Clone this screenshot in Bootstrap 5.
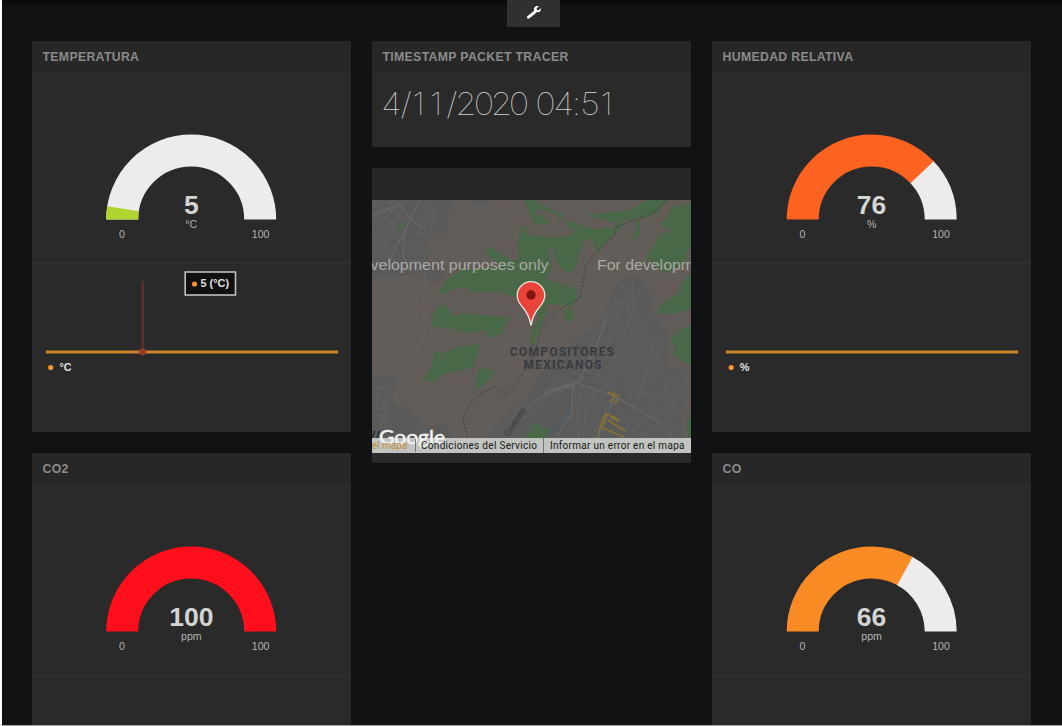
<!DOCTYPE html>
<html lang="es">
<head>
<meta charset="utf-8">
<meta name="viewport" content="width=device-width, initial-scale=1">
<title>Panel de sensores</title>
<link href="https://cdn.jsdelivr.net/npm/bootstrap@5.3.0/dist/css/bootstrap.min.css" rel="stylesheet">
<style>
  body { background: #111214; font-family: "Liberation Sans", Arial, sans-serif; height: 726px; overflow: hidden; border-left: 2px solid #fff; border-bottom: 1px solid #a5a5a5; }
  .board-top { height: 41px; padding-left: 3px; background: linear-gradient(#08090a, #111214 7px); }
  .tool-tab { width: 53px; height: 27px; background: #303030; }
  .board-cols { gap: 21px; padding-left: 30px; height: 684px; overflow: hidden; }
  .board-col { width: 319px; gap: 21px; }
  .pane { background: #2a2a2a; }
  .pane-cut { height: 272px; }
  .pane-title { height: 31px; line-height: 32px; padding-left: 10.5px; margin: 0; background: #272727; color: #8b8b8b; font-size: 12.3px; letter-spacing: .31px; font-weight: 700; white-space: nowrap; }
  .gauge-box { height: 192px; border-bottom: 1px solid #323232; }
  .spark-box { height: 168px; }
  .stamp-pane { height: 106px; }
  .stamp { font-family: Inter, sans-serif; font-weight: 100; font-size: 31.5px; fill: #d3d4d4; text-anchor: middle; }
  .map-head { height: 32px; background: #272727; }
  .map-foot { height: 10px; }
  svg { display: block; }
  .gv { font: 700 26.5px "Liberation Sans", sans-serif; fill: #d3d4d4; text-anchor: middle; }
  .gu { font: 10.6px "Liberation Sans", sans-serif; fill: #b3b3b3; text-anchor: middle; }
  .lg { font: 700 11px "Liberation Sans", sans-serif; fill: #e0e0e0; }
  .arc { fill: none; stroke-width: 32; }
  .green { fill: #486848; }
  .earth { fill: #625d58; }
  .urban { fill: #5a5a5a; }
  .street { fill: none; stroke: #636566; stroke-width: .8; }
  .avenue { fill: none; stroke: #676a6b; stroke-width: 1.2; }
  .trail { fill: none; stroke: #403f3e; stroke-width: 1; stroke-dasharray: 2 1.8; }
</style>
</head>
<body>
<header class="board-top d-flex align-items-start justify-content-center">
  <div class="tool-tab d-flex justify-content-center">
    <svg width="53" height="27" viewBox="0 0 53 27"><path d="M21.500 17.200l6.500-5.400" stroke="#fff" stroke-width="3" stroke-linecap="round"/><path d="M31.800 6.300l-2.300 2.200.5 1.400 1.500.3 2.300-2c.5 2.300-1 4.200-3.500 4.100-2.800-.1-4.200-2.400-3-4.500.9-1.600 2.700-2.200 4.500-1.500z" fill="#fff"/></svg>
  </div>
</header>
<main class="board-cols d-flex align-items-start">
  <div class="board-col d-flex flex-column">
    <section class="pane">
      <h2 class="pane-title">TEMPERATURA</h2>
      <div class="gauge-box">
        <svg width="319" height="191" viewBox="0 0 319 191">
          <path class="arc" stroke="#edebec" d="M90.2 147.5a69 69 0 0 1 138 0"/>
          <path class="arc" stroke="#b0d430" pathLength="100" stroke-dasharray="5 200" d="M90.2 147.5a69 69 0 0 1 138 0"/>
          <text class="gv" x="159.3" y="141.8">5</text><text class="gu" x="159.3" y="156.2">°C</text>
          <text class="gu" x="90" y="166">0</text><text class="gu" x="228.6" y="166">100</text>
        </svg>
      </div>
      <div class="spark-box">
        <svg width="319" height="168" viewBox="0 0 319 168">
          <path d="M14 88h292" stroke="#c9842a" stroke-width="3"/>
          <path d="M110.7 17v70" stroke="#6c302b" stroke-width="2"/>
          <circle cx="110.5" cy="87.7" r="3.5" fill="#9b3a2b"/>
          <rect x="153.2" y="8" width="50.3" height="23" fill="#111" stroke="#c0c0c0" stroke-width="1.6"/>
          <circle cx="162.5" cy="20" r="2.6" fill="#f7952c"/>
          <text class="lg" x="168.5" y="23.3" textLength="28.5" lengthAdjust="spacingAndGlyphs">5 (°C)</text>
          <circle cx="18.7" cy="103.6" r="2.6" fill="#f7952c"/><text class="lg" x="27.6" y="106.600" textLength="12" lengthAdjust="spacingAndGlyphs">°C</text>
        </svg>
      </div>
    </section>
    <section class="pane pane-cut">
      <h2 class="pane-title">CO2</h2>
      <div class="gauge-box">
        <svg width="319" height="191" viewBox="0 0 319 191">
          <path class="arc" stroke="#ff0f1b" d="M90.2 147.5a69 69 0 0 1 138 0"/>
          <text class="gv" x="159.3" y="141.8">100</text><text class="gu" x="159.3" y="156.2">ppm</text>
          <text class="gu" x="90" y="166">0</text><text class="gu" x="228.6" y="166">100</text>
        </svg>
      </div>
    </section>
  </div>

  <div class="board-col d-flex flex-column">
    <section class="pane stamp-pane">
      <h2 class="pane-title">TIMESTAMP PACKET TRACER</h2>
      <svg width="319" height="75" viewBox="0 0 319 75"><text class="stamp" transform="scale(1.1 1)" y="43" x="17.5 30.9 42.3 58.2 72.7 85.5 101.8 117.700 133.600 145 157.700 174.100 185.900 198.200 213.200">4/11/2020 04:51</text></svg>
    </section>
    <section class="pane">
      <div class="map-head"></div>
      <svg width="319" height="253" viewBox="372 200 319 253">
        <defs>
          <clipPath id="west"><path d="M372 200h69l-8 32-8 32-2 15-20-6-31 3z"/></clipPath>
          <clipPath id="city"><path d="M606 316l16-36 13-6 10 6 4 10 8 8-2 15 12 13 5 20-2 28 19 2v77H490l30-40 20-16 22-33z"/></clipPath>
          <clipPath id="south"><path d="M372 375h24v13l-8 8 4 12 12 2 14 13h12l2 15h-60z"/></clipPath>
        </defs>
        <rect class="earth" x="372" y="200" width="319" height="253"/>
        <path class="urban" d="M372 200h81l-5 16 1 17-16 0-5 10 1 20 16 9-10 12-8-5-2-6-20 3-33 2zM470 200h20l-5 5h-11z"/>
        <path class="urban" d="M606 316l4-18 8-15 13-8 12 5 4 10 8 8-4 14 12 13 6 17-2 25 20 3v30l-7 15 4 25v13H480l10-22 20-19 20-18 4-12 27-30 20-15z"/>
        <path class="urban" d="M372 375h24l4 7-9 13 5 9 15 5 15 17 20-2 8 14v15h-82z"/>
        <path d="M572 401l-3 17-9 9-11 8-3-5 14-9z" fill="#535a62"/>
        <g class="green">
          <path d="M400 222.500l5 .8-3.500 8-5-1.300z"/>
          <path d="M524.300 200h11l11 7 17 8-2 4 13 4 4-2 4 4 16 2 16 1 5-8 6 3-10 10-13 13-5 9-5-17-8 3-6 13-2 15-9 4-17-4 13 6 13 13 1 10-5 8-25-2-2 12-17-2-3-10-8-6-20-7-25 1-5-4-10 0-15 6-4-3 10-12 13-9 40-4-17-14 6-5 22 14 7-2-2-16 4-15 15-2-6-10z"/>
          <path d="M587 215l45-5 15-10h20l-8 10-11 7-36 5zM635 220h5v14l-6 7-2-3 4-10z"/>
          <path d="M691 202l-20 6-4 12-9 3 14 9-14 3-4 12-9 10 12 12 11 4 20-12-2-8 5-6zM691 273l-9 10-3 10-20 13-1 7 14 1 19-5zM691 325l-11 5-10 10 5 7-2 7 18 12zM691 413l-4 12 2 15h2z"/>
          <path d="M432 327l1-14 10-9 7 7 5 6 7-4 13 1 37 4-7 5-2 10-13 5-5-8-20 3-11-4zM435 352l8 1 15-6 22-3-7 24-28 5-12 9-11-2 10-13zM478 370l6-2 12 4-21 20 2-12z"/>
          <path d="M532 425l6-1 6 4 6-1-2 8-4 5h-19zM565 309h8l1 11-6 3-4-6zM540 315l5 2-8 20-4 10-3-4 2-13z"/>
        </g>
        <g class="earth">
          <path d="M538 210c8-2 12 3 19 5l5 3-8 3 25-2 20 3 10 2-8 6-22-5-6-4-9 3 12 6-6 6-19 2-20-3-6-4 8-5 17-3-7-7-10-1z"/>
          <path d="M548 246l5 1 2 12 6 9 9 6 7-2 2 4-3 12-12-3-18-6 6-12-3-10z"/>
        </g>
        <g clip-path="url(#west)">
          <path class="street" d="M372 208l20-7 14 8 10 13M372 218l24-12M372 228l18-14 12-8M372 240l22-20M372 252l16-20 10-14M372 261l28-38M378 200l24 46M388 200l22 36M372 232l32 22M372 214l36 28M372 246l24 16M396 200l-22 46M406 200l-26 54M372 267l32-30M404 248l20 5M410 244l18 5M402 259l22 4M416 232l14 4M424 218l14 5M426 208l12 5M419 203l8 2-8 30M436 204l-15 70M372 203l30 10M380 238l12 16M394 230l14 14M384 216l19 16M414 253l4 20"/>
          <path class="avenue" d="M420 200l-15 30-17 33M372 215l32-13M400 205l12 16 14 9M405 230l-2 25 8 18"/>
        </g>
        <path class="street" d="M425 265v12l-2 21 2 37-14 25-15 15h-24M396 375l1 10-10 12"/>
        <g clip-path="url(#south)"><path class="street" d="M374 388h13l-3 20-3 13 4 18M378 386l-2 22h10l-7 22M381 401h8M376 415l10 2M410 434l15-12 4 3-11 13M386 408v30"/></g>
        <g clip-path="url(#city)">
          <path class="street" d="M612 283l22 8M616 280l-8 28M610 292l15 20 14-20M623 285l7 32 12-33M632 277l2 38M607 306l35-10M605 316l34 3M602 322l34 7M598 327l37 12M594 332l35 14M590 338l37 15M586 343l40 18M603 315l-20 45M611 308l-24 64M620 308l-25 75M630 318l-28 75M637 322l-23 60M646 330l-18 42M655 340l-25 80M662 339l-25 60M640 345l30 7M635 354l32 8M632 365l30 8M627 376l32 7M622 387l30 8M645 336l18 30M639 370l-12 36M652 313l-18 26M564 353l30 22 22 4M557 360l28 20M552 366l25 18M546 374l25 13M540 382l32 7M534 391l40-6M530 399l44-13M526 408l48-23M520 420l20-12 8-15M574 380l5 60M581 383l-3 60M588 386l-5 56M595 390l-15 45M603 395l-20 45M613 400l-25 42M570 406l35 15M565 415l40 17M560 425l40 14M580 396l30 12M625 410l-20 30M636 415l-17 24M646 418l-22 22M657 424l-20 18M614 425l46 14M622 416l48 17M668 376l-5 16 12 10-4 18M675 378h12l-3 8-14-3M645 395l21 5 10-6 9 4M648 404l12 6 14-3 8 5M650 410l5 8 18 4 2 9M664 390l4 14 16 3M490 440l28-42M498 440l22-32M480 425l15 11M487 416l22 16M500 415l9 6M510 410l10 7"/>
          <path class="avenue" d="M520 412l25-18 30-12 38 14 27 14 30 20 3 22M573 382l-1 31-18 28M615 398l-14 32-4 12M540 392l35-7M605 315l-3 17-23 50"/>
        </g>
        <path class="street" d="M484 427l12 6M487 423l13 7M491 418l12 8M499 437l29-43M524 438l12-14"/>
        <path fill="none" stroke="#87712f" stroke-width="1.500" d="M608 392l5 3v4l-4 3M614 391l1 5 5-1M620 399l-4 2v4M606 413l-4 8-5 18M604 413l14 6M607 414l-5 14 22 9M608 420l17 11M610 417l9 4"/>
        <path class="trail" d="M666 200l-9 11-20 8-22 8v8l-21 20-8 10-6 33-14 8-11 7-12 12-6 20-5 14-16 25-11 11-10-8-14 6-9 8-9 17 4 17-1 18"/>
        <g font-family="Liberation Sans, sans-serif" font-size="14.500" fill="#aaa9a5">
          <text x="370.500" y="270.300" textLength="178" lengthAdjust="spacingAndGlyphs">velopment purposes only</text>
          <text x="597" y="270.300" textLength="97" lengthAdjust="spacingAndGlyphs">For developm</text>
        </g>
        <g font-family="Roboto, sans-serif" font-size="12" font-weight="700" fill="#373a3f">
          <text x="510" y="356" textLength="104">COMPOSITORES</text>
          <text x="523.500" y="369" textLength="78">MEXICANOS</text>
        </g>
        <text x="509" y="437" transform="rotate(-58 509 437)" font-family="Roboto, sans-serif" font-size="8.500" fill="#38393a" textLength="32">Guerrero</text>
        <path d="M531 325.500c-1.500-9-4-13.500-8.500-18.500-3.500-4-5.300-7-5.300-11.500a13.800 13.800 0 0 1 27.600 0c0 4.500-1.800 7.500-5.300 11.500-4.500 5-7 9.500-8.500 18.500z" fill="#ea4339" stroke="#eee4df" stroke-width="1.300"/>
        <circle cx="531" cy="295" r="4.700" fill="#811411"/>
        <path d="M372 438l3-7M379 431l-2 8" stroke="#292a2b" stroke-width="1.500"/>
        <path fill="#c6c9c5" fill-opacity=".96" d="M372 438h319v15H372z"/>
        <text x="379" y="443.500" font-family="Lato, sans-serif" font-size="20" fill="#f3f3f3" stroke="#f3f3f3" stroke-width=".5" textLength="66" lengthAdjust="spacingAndGlyphs">Google</text>
        <g font-family="Roboto, sans-serif" font-size="10" fill="#191919">
          <text x="371.500" y="448.500" fill="#c68c40" textLength="36">el mapa</text>
          <text x="421" y="448.500" textLength="116">Condiciones del Servicio</text>
          <text x="550" y="448.500" textLength="134.500">Informar un error en el mapa</text>
        </g>
        <path d="M415.500 439v13M543.500 438v15" stroke="#737673"/>
      </svg>
      <div class="map-foot"></div>
    </section>
  </div>

  <div class="board-col d-flex flex-column">
    <section class="pane">
      <h2 class="pane-title">HUMEDAD RELATIVA</h2>
      <div class="gauge-box">
        <svg width="319" height="191" viewBox="0 0 319 191">
          <path class="arc" stroke="#edebec" pathLength="100" stroke-dasharray="0 75.500 30" d="M90.700 147.500a69 69 0 0 1 138 0"/>
          <path class="arc" stroke="#fc6220" pathLength="100" stroke-dasharray="76 200" d="M90.700 147.500a69 69 0 0 1 138 0"/>
          <text class="gv" x="159.600" y="141.800">76</text><text class="gu" x="159.600" y="156.200">%</text>
          <text class="gu" x="90.500" y="166">0</text><text class="gu" x="229" y="166">100</text>
        </svg>
      </div>
      <div class="spark-box">
        <svg width="319" height="168" viewBox="0 0 319 168">
          <path d="M14 88h292" stroke="#c9842a" stroke-width="3"/>
          <circle cx="19.200" cy="103.600" r="2.600" fill="#f7952c"/><text class="lg" x="27.800" y="106.600">%</text>
        </svg>
      </div>
    </section>
    <section class="pane pane-cut">
      <h2 class="pane-title">CO</h2>
      <div class="gauge-box">
        <svg width="319" height="191" viewBox="0 0 319 191">
          <path class="arc" stroke="#edebec" pathLength="100" stroke-dasharray="0 65.500 40" d="M90.700 147.500a69 69 0 0 1 138 0"/>
          <path class="arc" stroke="#f98b25" pathLength="100" stroke-dasharray="66 200" d="M90.700 147.500a69 69 0 0 1 138 0"/>
          <text class="gv" x="159.600" y="141.800">66</text><text class="gu" x="159.600" y="156.200">ppm</text>
          <text class="gu" x="90.500" y="166">0</text><text class="gu" x="229" y="166">100</text>
        </svg>
      </div>
    </section>
  </div>
</main>
<script src="https://cdn.jsdelivr.net/npm/bootstrap@5.3.0/dist/js/bootstrap.bundle.min.js"></script>
</body>
</html>
